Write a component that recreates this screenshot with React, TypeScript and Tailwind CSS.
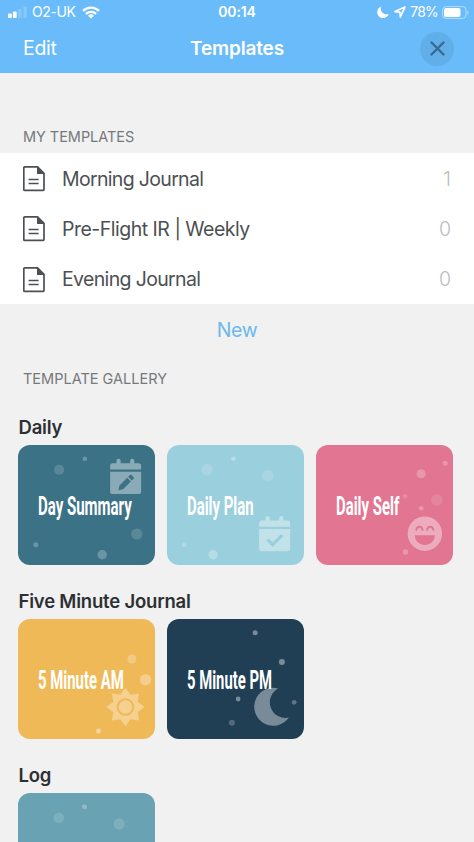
import type { ReactNode } from "react";

type Dot = [cx: number, cy: number, r: number, opacity: number];

type Card = {
  title: string;
  bg: string;
  label: string;
  dots: Dot[];
  icon?: ReactNode;
};

const templates = [
  { name: "Morning Journal", count: 1, tracking: "tracking-[-0.67px]" },
  { name: "Pre-Flight IR | Weekly", count: 0, tracking: "tracking-[-0.5px]" },
  { name: "Evening Journal", count: 0, tracking: "tracking-[-0.65px]" },
];

function Calendar({ y, children }: { y: number; children: ReactNode }) {
  return (
    <g transform={`translate(92 ${y})`}>
      <g fill="#fff" opacity="0.4">
        <path d="M0 10.8V7a2.6 2.6 0 0 1 2.6-2.6h3.7V2a2.1 2.1 0 0 1 4.2 0v2.4H20V2a2.1 2.1 0 0 1 4.2 0v2.4h4.2A2.6 2.6 0 0 1 31 7v3.8z" />
        <path d="M0 13h31v19.6a2.6 2.6 0 0 1-2.6 2.6H2.6A2.6 2.6 0 0 1 0 32.6z" />
      </g>
      {children}
    </g>
  );
}

function Smile() {
  return (
    <g>
      <circle cx="108.7" cy="88.7" r="17.2" fill="#fff" opacity="0.4" />
      <g fill="none" stroke="#e17592" strokeWidth="2" strokeLinecap="round">
        <path d="M100.2 84.8c.8-4.2 5.4-4.2 6.2 0M111 84.8c.8-4.2 5.4-4.2 6.2 0" />
      </g>
      <path d="M98.7 90.3h20c0 5.8-4.4 9.6-10 9.6s-10-3.8-10-9.6z" fill="#e17592" />
    </g>
  );
}

function Sun() {
  const points = Array.from({ length: 16 }, (_, i) => {
    const r = i % 2 === 0 ? 19.2 : 13.2;
    const a = (i * Math.PI) / 8;
    return `${(107.3 + r * Math.sin(a)).toFixed(1)},${(88 - r * Math.cos(a)).toFixed(1)}`;
  }).join(" ");

  return (
    <g>
      <polygon points={points} fill="#f5d08f" />
      <circle cx="107.3" cy="88" r="7.8" fill="#f5d08f" stroke="#efb958" strokeWidth="2" />
    </g>
  );
}

const sections: { title: string; cards: Card[] }[] = [
  {
    title: "Daily",
    cards: [
      {
        title: "Day Summary",
        bg: "bg-[#3b7286]",
        label: "scale-x-[0.577]",
        dots: [
          [41, 24.7, 5, 0.16],
          [66.7, 13.7, 2.3, 0.25],
          [118.7, 89, 5.6, 0.16],
          [84, 109.7, 4.7, 0.25],
          [17.7, 99.7, 2.5, 0.25],
        ],
        icon: (
          <Calendar y={13.8}>
            <path
              fill="#3b7286"
              d="M8.3 31.4l1-4.7 7.7-7.7 3.7 3.7-7.7 7.7zM18 18l1.6-1.5c.6-.6 1.3-.6 1.9 0l1.8 1.8c.6.6.6 1.3 0 1.9l-1.6 1.5z"
            />
          </Calendar>
        ),
      },
      {
        title: "Daily Plan",
        bg: "bg-[#9acfdd]",
        label: "scale-x-[0.573]",
        dots: [
          [40, 24.7, 5.7, 0.14],
          [66.3, 13.7, 2.3, 0.28],
          [100.7, 30.7, 5.8, 0.14],
          [46, 109.7, 4.7, 0.28],
          [17, 99.7, 2.5, 0.22],
        ],
        icon: (
          <Calendar y={71}>
            <path
              fill="none"
              stroke="#9acfdd"
              strokeWidth="3.2"
              strokeLinecap="square"
              d="M9.5 24.7l4 4 8.4-8.4"
            />
          </Calendar>
        ),
      },
      {
        title: "Daily Self",
        bg: "bg-[#e17592]",
        label: "scale-x-[0.573]",
        dots: [
          [105, 28.7, 4.5, 0.25],
          [129, 18.3, 2.5, 0.25],
          [89, 51.3, 2.3, 0.16],
          [120.7, 55, 5.7, 0.12],
          [105, 63.3, 2.3, 0.25],
          [89.3, 107, 2.7, 0.25],
        ],
        icon: <Smile />,
      },
    ],
  },
  {
    title: "Five Minute Journal",
    cards: [
      {
        title: "5 Minute AM",
        bg: "bg-[#efb958]",
        label: "scale-x-[0.573]",
        dots: [
          [113.7, 40, 4.5, 0.25],
          [127.3, 60.7, 5.7, 0.3],
          [80.3, 112, 2.5, 0.4],
        ],
        icon: <Sun />,
      },
      {
        title: "5 Minute PM",
        bg: "bg-[#203f55]",
        label: "scale-x-[0.57]",
        dots: [
          [88, 13.7, 2.5, 0.4],
          [114.7, 43, 3, 0.4],
          [71, 80, 2.4, 0.4],
          [127, 83.3, 2.4, 0.28],
          [64.7, 103.7, 3, 0.22],
        ],
        icon: (
          <path
            d="M111 69.4A19 19 0 1 0 121.7 98.6A15.7 15.7 0 0 1 111 69.4z"
            fill="#fff"
            opacity="0.4"
          />
        ),
      },
    ],
  },
  {
    title: "Log",
    cards: [
      {
        title: "",
        bg: "bg-[#69a2b2]",
        label: "",
        dots: [
          [40.7, 24.7, 5.3, 0.14],
          [66.3, 13.7, 2.5, 0.25],
          [101, 31, 5.7, 0.14],
        ],
      },
    ],
  },
];

function StatusBar() {
  return (
    <div className="grid h-6 grid-cols-3 items-center pl-2 pr-[5px] text-[14px] leading-none">
      <div className="flex items-center">
        <svg className="h-[13px] w-[19px]" viewBox="0 0 19 13" fill="#fff">
          <rect x="0" y="7.5" width="3.8" height="4.5" rx="0.8" />
          <rect x="4.9" y="5.5" width="3.8" height="6.5" rx="0.8" />
          <rect x="10.2" y="3" width="3.4" height="9" rx="0.8" opacity="0.2" />
          <rect x="15.4" y="0.5" width="3.4" height="11.5" rx="0.8" opacity="0.2" />
        </svg>
        <span className="ml-[5px] tracking-[-0.4px]">O2-UK</span>
        <svg className="ml-[6px] h-[13px] w-[18px]" viewBox="0 0 18 13">
          <g fill="none" stroke="#fff" strokeWidth="2.3">
            <path d="M1 4.9a11.4 11.4 0 0 1 16 0" />
            <path d="M3.9 7.9a7.2 7.2 0 0 1 10.2 0" />
          </g>
          <path d="M9 12.6L6 9.7a4.3 4.3 0 0 1 6 0z" fill="#fff" />
        </svg>
      </div>
      <div className="pr-[3px] text-center font-semibold tracking-[-0.1px]">00:14</div>
      <div className="flex items-center justify-end">
        <svg className="h-[12px] w-[12px]" viewBox="0 0 12 12" fill="#fff">
          <path d="M4.1.6A5.9 5.9 0 1 0 11.7 8 5.8 5.8 0 0 1 4.1.6z" />
        </svg>
        <svg className="ml-[5px] h-[12px] w-[12px]" viewBox="0 0 12 12">
          <path
            d="M10.9 1.1L1 5.6l4.9.5.4 5z"
            fill="none"
            stroke="#fff"
            strokeWidth="1.6"
            strokeLinejoin="round"
          />
        </svg>
        <span className="ml-[4px] tracking-[-0.8px]">78%</span>
        <svg className="ml-[4px] h-[13px] w-[27px]" viewBox="0 0 27 13">
          <rect x="0.6" y="0.6" width="23.4" height="11.8" rx="3.4" fill="none" stroke="#fff" opacity="0.5" />
          <rect x="2" y="2" width="16.5" height="9" rx="2" fill="#fff" />
          <path d="M25.4 4.5c1.6.6 1.6 3.4 0 4z" fill="#fff" opacity="0.5" />
        </svg>
      </div>
    </div>
  );
}

function DocIcon() {
  return (
    <svg className="h-[26px] w-[22px]" viewBox="0 0 22 26">
      <path
        d="M1.7 .9H14.5L21 7.4V23.5a.9.9 0 0 1-.9.9H1.7a.9.9 0 0 1-.9-.9V1.8a.9.9 0 0 1 .9-.9z"
        fill="none"
        stroke="#4c5053"
        strokeWidth="1.7"
      />
      <path d="M14 .6L21.4 8H14z" fill="#4c5053" />
      <path d="M5.6 13.5h10M5.6 17.5h10" stroke="#4c5053" strokeWidth="1.6" />
    </svg>
  );
}

function TemplateCard({ card }: { card: Card }) {
  return (
    <div className={`relative h-[120px] w-[137.3px] shrink-0 overflow-hidden rounded-[12px] ${card.bg}`}>
      <svg className="absolute inset-0 h-full w-full" viewBox="0 0 137 120">
        {card.dots.map(([cx, cy, r, opacity]) => (
          <circle key={`${cx}-${cy}`} cx={cx} cy={cy} r={r} fill="#fff" opacity={opacity} />
        ))}
        {card.icon}
      </svg>
      <div className="relative flex h-full items-center pl-[19.6px] pt-px">
        <span
          className={`origin-left whitespace-nowrap font-[Roboto] text-[26px] font-bold leading-none text-white ${card.label}`}
        >
          {card.title}
        </span>
      </div>
    </div>
  );
}

export default function App() {
  return (
    <div className="h-[842px] w-[474px] overflow-hidden bg-[#f1f1f1] font-[Inter,sans-serif] text-[#4c5053]">
      <header className="h-[73px] bg-[#69bbf9] text-white">
        <StatusBar />
        <div className="grid h-[49px] grid-cols-3 items-center pl-[23px] pr-5">
          <button className="text-left text-[19.5px] tracking-[-0.3px]">Edit</button>
          <h1 className="pr-[3px] pt-px text-center text-[19px] font-semibold tracking-[-0.15px]">Templates</h1>
          <button className="flex size-[34px] items-center justify-center justify-self-end rounded-full bg-[#61afe9]">
            <svg className="size-[15px]" viewBox="0 0 15 15">
              <path d="M1.5 1.5l12 12M13.5 1.5l-12 12" stroke="#3b6a90" strokeWidth="2.4" strokeLinecap="round" />
            </svg>
          </button>
        </div>
      </header>

      <h2 className="mt-[54px] h-[26px] pl-[23px] text-[14.5px] leading-5 tracking-[-0.05px] text-[#76797c]">
        MY TEMPLATES
      </h2>
      <ul className="h-[151px] bg-white">
        {templates.map((t) => (
          <li key={t.name} className="flex h-[50.3px] items-center pl-[23px] pr-[23px] pt-[2px] text-[19.5px]">
            <DocIcon />
            <span className={`ml-[17px] flex-1 ${t.tracking}`}>{t.name}</span>
            <span className="font-light text-[#bcbcbc]">{t.count}</span>
          </li>
        ))}
      </ul>
      <button className="flex h-[52px] w-full items-center justify-center pt-[2px] text-[19.5px] tracking-[-0.4px] text-[#6db9ea]">
        New
      </button>
      <h2 className="mt-[13px] pl-[23px] text-[14.5px] leading-5 text-[#76797c]">TEMPLATE GALLERY</h2>

      <div className="mt-[26px] flex flex-col gap-[24px] pl-[18px]">
        {sections.map((s) => (
          <section key={s.title}>
            <h3 className="h-[30px] pl-[0.5px] text-[18.5px] font-semibold leading-6 tracking-[-0.2px] text-[#2c3033]">
              {s.title}
            </h3>
            <div className="flex gap-[11.7px]">
              {s.cards.map((c) => (
                <TemplateCard key={c.title} card={c} />
              ))}
            </div>
          </section>
        ))}
      </div>
    </div>
  );
}
